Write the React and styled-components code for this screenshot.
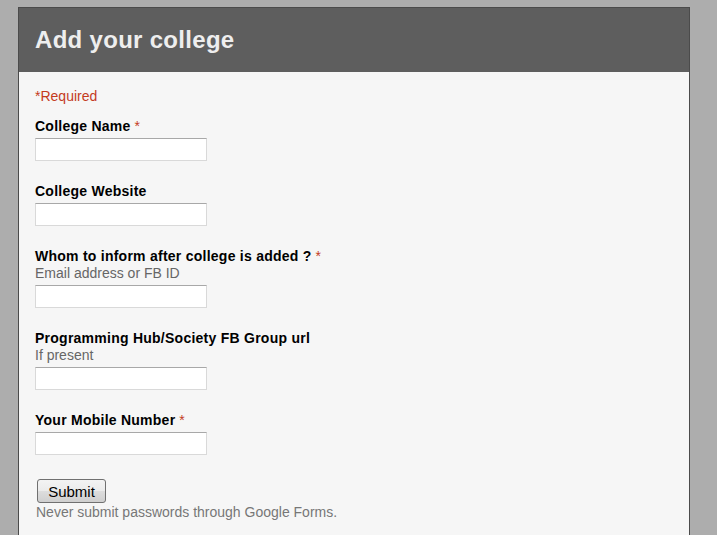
import React from "react";
import styled, { createGlobalStyle } from "styled-components";

const Global = createGlobalStyle`
  html, body {
    margin: 0;
    padding: 0;
    background: #adadad;
    font-family: Arial, "Liberation Sans", sans-serif;
  }
  body { height: 535px; overflow: hidden; }
`;

const Page = styled.div`
  padding: 7px 0 0 18px;
`;

const Card = styled.div`
  width: 670px;
  min-height: 600px;
  border: 1px solid #4b4b4b;
  border-bottom: none;
  background: #f6f6f6;
`;

const Header = styled.div`
  height: 64px;
  background: #5e5e5e;
  display: flex;
  align-items: center;
  padding-left: 16px;
`;

const Title = styled.h1`
  margin: 0;
  font-size: 24px;
  font-weight: bold;
  letter-spacing: 0.3px;
  color: #eeeeee;
  line-height: normal;
`;

const Body = styled.div`
  padding: 16px 16px;
`;

const Required = styled.div`
  color: #c43b1d;
  font-size: 14px;
  line-height: 16px;
  margin-bottom: 14px;
`;

const Question = styled.div`
  margin-bottom: 22px;
`;

const Label = styled.div`
  font-size: 14px;
  font-weight: bold;
  letter-spacing: 0.25px;
  line-height: 16px;
  color: #000;
  margin-bottom: ${(p) => (p.$hasHelp ? "1px" : "4px")};
`;

const Star = styled.span`
  color: #c43b1d;
  font-weight: normal;
  letter-spacing: 0;
  margin-left: 4px;
`;

const Help = styled.div`
  font-size: 14px;
  line-height: 17px;
  color: #666;
  margin-bottom: 3px;
`;

const Input = styled.input`
  display: block;
  box-sizing: border-box;
  width: 172px;
  height: 23px;
  margin: 0;
  border: 1px solid #d9d9d9;
  border-top-color: #a8a8a8;
  background: #fff;
  outline: none;
`;

const SubmitButton = styled.button`
  box-sizing: border-box;
  width: 69px;
  height: 24px;
  margin: 2px 2px 0 2px;
  padding: 0;
  border: 1px solid #707070;
  border-radius: 3px;
  background: linear-gradient(#f3f3f3 0%, #ebebeb 50%, #dddddd 51%, #cfcfcf 100%);
  font-family: Arial, "Liberation Sans", sans-serif;
  font-size: 15px;
  color: #000;
`;

const Note = styled.div`
  font-size: 14px;
  line-height: 17px;
  color: #777;
  margin-top: 1px;
  padding-left: 1px;
`;

const questions = [
  { label: "College Name", required: true },
  { label: "College Website" },
  { label: "Whom to inform after college is added ?", required: true, help: "Email address or FB ID" },
  { label: "Programming Hub/Society FB Group url", help: "If present" },
  { label: "Your Mobile Number", required: true },
];

export default function App() {
  return (
    <>
      <Global />
      <Page>
        <Card>
          <Header>
            <Title>Add your college</Title>
          </Header>
          <Body>
            <Required>*Required</Required>
            {questions.map((q) => (
              <Question key={q.label}>
                <Label $hasHelp={!!q.help}>
                  {q.label}
                  {q.required && <Star>*</Star>}
                </Label>
                {q.help && <Help>{q.help}</Help>}
                <Input type="text" />
              </Question>
            ))}
            <SubmitButton type="button">Submit</SubmitButton>
            <Note>Never submit passwords through Google Forms.</Note>
          </Body>
        </Card>
      </Page>
    </>
  );
}
